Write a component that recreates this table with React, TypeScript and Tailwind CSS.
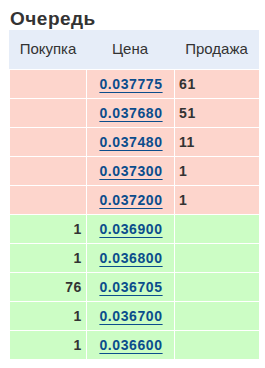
import React from 'react'

interface Row {
  buy: string;
  price: string;
  sell: string;
}

const asks: Row[] = [
  { buy: '', price: '0.037775', sell: '61' },
  { buy: '', price: '0.037680', sell: '51' },
  { buy: '', price: '0.037480', sell: '11' },
  { buy: '', price: '0.037300', sell: '1' },
  { buy: '', price: '0.037200', sell: '1' },
]

const bids: Row[] = [
  { buy: '1', price: '0.036900', sell: '' },
  { buy: '1', price: '0.036800', sell: '' },
  { buy: '76', price: '0.036705', sell: '' },
  { buy: '1', price: '0.036700', sell: '' },
  { buy: '1', price: '0.036600', sell: '' },
]

const BookRow: React.FC<{ row: Row; bg: string }> = ({ row, bg }) => {
  return (
    <>
      <div className={`${bg} h-[28px] flex items-center justify-end pr-[4px]`}>{row.buy}</div>
      <div className={`${bg} h-[28px] flex items-center justify-center pl-[1px]`}>
        <a href="#" className="text-[#0b4d8c] underline underline-offset-[3px]">{row.price}</a>
      </div>
      <div className={`${bg} h-[28px] flex items-center pl-[4px]`}>{row.sell}</div>
    </>
  )
}

export default function App() {
  return (
    <div className="bg-white min-h-screen pl-[9px] pt-[8px] font-['Liberation_Sans',Arial,sans-serif]">
      {/* title */}
      <h2 className="ml-px mb-px text-[19px] leading-[21px] tracking-[0.5px] font-bold text-[#333]">Очередь</h2>
      <div className="w-[250px]">
        {/* header */}
        <div className="grid grid-cols-[77px_88px_85px] h-[39px] bg-[#e6edf8] text-[15px] text-[#333]">
          <div className="flex items-center justify-center pl-px">Покупка</div>
          <div className="flex items-center justify-center">Цена</div>
          <div className="flex items-center justify-center">Продажа</div>
        </div>
        {/* book */}
        <div className="grid grid-cols-[76px_87px_84px] gap-px pl-px pt-px text-[14px] tracking-[0.6px] font-bold text-[#333]">
          {asks.map((r) => (
            <BookRow key={r.price} row={r} bg="bg-[#fdd5cc]" />
          ))}
          {bids.map((r) => (
            <BookRow key={r.price} row={r} bg="bg-[#ccfdc5]" />
          ))}
        </div>
      </div>
    </div>
  )
}
